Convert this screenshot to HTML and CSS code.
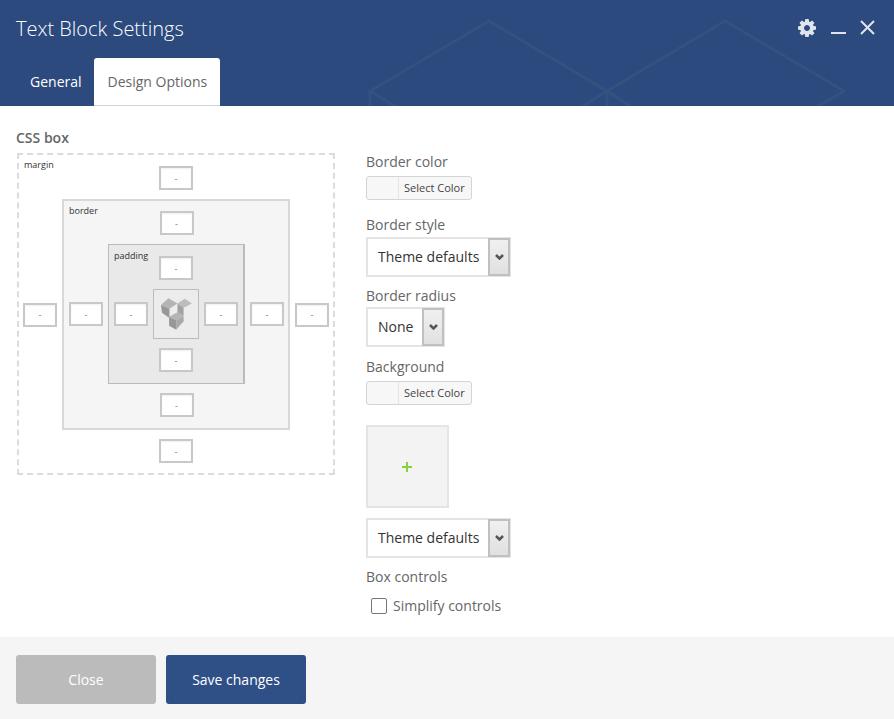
FILE: index.html
```html
<!DOCTYPE html>
<html lang="en">
<head>
    <meta charset="UTF-8">
    <meta name="viewport" content="width=device-width, initial-scale=1.0">
    <title>Text Block Settings</title>
    <link rel="stylesheet" href="styles.css">
</head>
<body>
    <div class="panel">
        <header class="panel-header">
            <!-- background pattern -->
            <svg class="header-pattern" width="894" height="106" viewBox="0 0 894 106">
                <path d="M370 106V91L489 21L607 91L725 21L844 91L815 108M370 91L398 108M607 91V106M607 91L580 108M607 91L633 108" />
            </svg>
            <div class="title-row">
                <h1>Text Block Settings</h1>
                <div class="header-controls">
                    <svg class="icon-gear" width="18" height="18" viewBox="128 128 1536 1536"><path d="M1152 896q0-106-75-181t-181-75-181 75-75 181 75 181 181 75 181-75 75-181zm512-109v222q0 12-8 23t-20 13l-185 28q-19 54-39 91 35 50 107 138 10 12 10 25t-9 23q-27 37-99 108t-94 71q-12 0-26-9l-138-108q-44 23-91 38-16 136-29 186-7 28-36 28h-222q-14 0-24.500-8.500t-11.500-21.500l-28-184q-49-16-90-37l-141 107q-10 9-25 9-14 0-25-11-126-114-165-168-7-10-7-23 0-12 8-23 15-21 51-66.500t54-70.500q-27-50-41-99l-183-27q-13-2-21-12.500t-8-23.500v-222q0-12 8-23t19-13l186-28q14-46 39-92-40-57-107-138-10-12-10-24 0-10 9-23 26-36 98.500-107.500t94.500-71.500q13 0 26 10l138 107q44-23 91-38 16-136 29-186 7-28 36-28h222q14 0 24.500 8.500t11.500 21.500l28 184q49 16 90 37l142-107q9-9 24-9 13 0 25 10 129 119 165 170 7 8 7 22 0 12-8 23-15 21-51 66.500t-54 70.500q26 50 41 98l183 28q13 2 21 12.500t8 23.500z"/></svg>
                    <span class="icon-minimize"></span>
                    <svg class="icon-close" width="15" height="15" viewBox="0 0 15 15"><path d="M1 1L14 14M14 1L1 14"/></svg>
                </div>
            </div>
            <nav class="tabs">
                <a class="tab">General</a>
                <a class="tab active">Design Options</a>
            </nav>
        </header>

        <main class="panel-body">
            <section class="css-box-col">
                <div class="heading">CSS box</div>
                <div class="layer layer-margin">
                    <span class="layer-label">margin</span>
                    <input class="box-input top" value="-">
                    <input class="box-input left" value="-">
                    <div class="layer layer-border">
                        <span class="layer-label">border</span>
                        <input class="box-input top" value="-">
                        <input class="box-input left" value="-">
                        <div class="layer layer-padding">
                            <span class="layer-label">padding</span>
                            <input class="box-input top" value="-">
                            <input class="box-input left" value="-">
                            <div class="layer-content">
                                <svg width="31" height="32" viewBox="183 57 92 93">
                                    <polygon fill="#b4b4b4" points="183,77 205,57 232,72 208,88"/>
                                    <polygon fill="#989898" points="183,77 208,88 208,115 186,100"/>
                                    <polygon fill="#bcbcbc" points="232,72 253,58 275,72 250,85"/>
                                    <polygon fill="#a2a2a2" points="232,72 250,85 250,110 232,98"/>
                                    <polygon fill="#b4b4b4" points="207,112 232,98 250,110 228,122"/>
                                    <polygon fill="#989898" points="207,112 228,122 228,150 207,138"/>
                                    <polygon fill="#a8a8a8" points="228,122 250,110 250,125 228,150"/>
                                </svg>
                            </div>
                            <input class="box-input right" value="-">
                            <input class="box-input bottom" value="-">
                        </div>
                        <input class="box-input right" value="-">
                        <input class="box-input bottom" value="-">
                    </div>
                    <input class="box-input right" value="-">
                    <input class="box-input bottom" value="-">
                </div>
            </section>

            <section class="options-col">
                <div class="field-label">Border color</div>
                <div class="color-btn gap-15"><span class="swatch"></span><span class="color-text">Select Color</span></div>

                <div class="field-label gap-2">Border style</div>
                <div class="select-box wide gap-9"><span class="select-value">Theme defaults</span><span class="select-arrow"><svg width="9" height="6" viewBox="0 0 9 6"><path d="M1 1L4.500 4.500L8 1"/></svg></span></div>

                <div class="field-label gap-1">Border radius</div>
                <div class="select-box narrow gap-10"><span class="select-value">None</span><span class="select-arrow"><svg width="9" height="6" viewBox="0 0 9 6"><path d="M1 1L4.500 4.500L8 1"/></svg></span></div>

                <div class="field-label">Background</div>
                <div class="color-btn gap-20"><span class="swatch"></span><span class="color-text">Select Color</span></div>

                <div class="image-add"><svg width="10" height="10" viewBox="0 0 10 10"><path d="M5 0V10M0 5H10"/></svg></div>

                <div class="select-box wide gap-9"><span class="select-value">Theme defaults</span><span class="select-arrow"><svg width="9" height="6" viewBox="0 0 9 6"><path d="M1 1L4.500 4.500L8 1"/></svg></span></div>

                <div class="field-label gap-9">Box controls</div>
                <label class="check-row"><span class="checkbox"></span><span class="check-text">Simplify controls</span></label>
            </section>
        </main>

        <footer class="panel-footer">
            <button class="btn btn-close">Close</button>
            <button class="btn btn-save">Save changes</button>
        </footer>
    </div>
</body>
</html>
```

FILE: styles.css
```css
* {
    box-sizing: border-box;
}
body {
    margin: 0;
    font-family: "Open Sans", sans-serif;
    font-size: 14px;
    color: #666;
    background: #fff;
}
.panel {
    display: flex;
    flex-direction: column;
    height: 719px;
    overflow: hidden;
}

/* header */
.panel-header {
    position: relative;
    height: 106px;
    display: flex;
    flex-direction: column;
    background-color: #2c4a7e;
    overflow: hidden;
}
.header-pattern {
    position: absolute;
    left: 0;
    top: 0;
}
.header-pattern path {
    fill: none;
    stroke: #33527f;
    stroke-width: 3;
}
.title-row {
    position: relative;
    height: 58px;
    display: flex;
    justify-content: space-between;
    padding: 15px 19px 0 16px;
}
h1 {
    margin: 0;
    font-size: 20px;
    font-weight: 300;
    line-height: 28px;
    color: #fff;
}
.header-controls {
    display: flex;
    align-items: flex-start;
    padding-top: 3px;
}
.icon-gear {
    margin-top: 1px;
    fill: #e0e4ec;
}
.icon-minimize {
    width: 15px;
    height: 2px;
    margin: 14px 14px 0 15px;
    background: #e0e4ec;
}
.icon-close {
    margin-top: 2px;
}
.icon-close path {
    fill: none;
    stroke: #e0e4ec;
    stroke-width: 2;
}
.tabs {
    position: relative;
    height: 48px;
    display: flex;
    padding-left: 16px;
}
.tab {
    padding: 0 12px 0 14px;
    line-height: 48px;
    color: #fff;
}
.tab.active {
    padding: 0 13px 0 14px;
    background: #fff;
    color: #666;
    border-radius: 3px 3px 0 0;
    border-bottom: 1px solid #ced3dc;
}

/* body */
.panel-body {
    flex: 1;
    display: flex;
    padding: 22px 0 0 16px;
}
.css-box-col {
    width: 350px;
}
.heading {
    font-weight: 600;
    line-height: 20px;
    margin-bottom: 5px;
}
.layer {
    position: relative;
    display: grid;
    grid-template-columns: 34px 1fr 34px;
    grid-template-rows: 24px 1fr 24px;
    gap: 9px 5px;
}
.layer > .layer,
.layer > .layer-content {
    grid-column: 2;
    grid-row: 2;
}
.layer-margin {
    width: 318px;
    height: 322px;
    margin-left: 1px;
    padding: 11px 4px 10px;
    border: 2px dashed #dcdcdc;
}
.layer-border {
    padding: 10px 4px 11px 5px;
    background: #f5f5f5;
    border: 2px solid #d8d8d8;
}
.layer-padding {
    padding: 11px 5px 11px 5px;
    background: #e9e9e9;
    border: 1px solid #bbb;
    border-right-width: 2px;
}
.layer-content {
    display: flex;
    align-items: center;
    justify-content: center;
    background: #ececec;
    border: 1px solid #bbb;
}
.layer-label {
    position: absolute;
    left: 5px;
    top: 4px;
    font-size: 9px;
    line-height: 14px;
    color: #333;
}
.layer-margin > .layer-label {
    top: 3px;
}
.layer-border > .layer-label {
    top: 3px;
}
.box-input {
    width: 34px;
    height: 24px;
    padding: 0;
    font: 9px "Open Sans", sans-serif;
    color: #777;
    text-align: center;
    background: #fff;
    border: 2px solid #c8c8c8;
    border-radius: 0;
    box-shadow: inset 0 1px 2px #f0f0f0;
}
.box-input.top {
    grid-column: 2;
    grid-row: 1;
    justify-self: center;
}
.box-input.bottom {
    grid-column: 2;
    grid-row: 3;
    justify-self: center;
}
.box-input.left {
    grid-column: 1;
    grid-row: 2;
    align-self: center;
}
.box-input.right {
    grid-column: 3;
    grid-row: 2;
    align-self: center;
}

/* options column */
.options-col {
    margin-top: 24px;
    width: 200px;
}
.field-label {
    line-height: 20px;
    margin-bottom: 4px;
}
.color-btn {
    display: flex;
    width: 106px;
    height: 24px;
    border: 1px solid #d4d4d4;
    border-radius: 3px;
    background: #f7f7f7;
}
.swatch {
    width: 32px;
    border-right: 1px solid #e4e4e4;
}
.color-text {
    padding-left: 5px;
    font-size: 11px;
    line-height: 22px;
    color: #444;
}
.field-label.gap-1 {
    margin-bottom: 1px;
}
.field-label.gap-2 {
    margin-bottom: 2px;
}
.gap-9,
.field-label.gap-9 {
    margin-bottom: 9px;
}
.gap-10 {
    margin-bottom: 10px;
}
.gap-15 {
    margin-bottom: 15px;
}
.gap-20 {
    margin-bottom: 20px;
}
.select-box {
    display: flex;
    justify-content: space-between;
    height: 40px;
    border: 2px solid #e4e4e4;
    background: #fff;
}
.select-box.wide {
    width: 145px;
}
.select-box.narrow {
    width: 79px;
}
.select-value {
    padding-left: 10px;
    line-height: 36px;
    color: #333;
}
.select-arrow {
    width: 22px;
    margin: -1px -1px -1px 0;
    display: flex;
    align-items: center;
    justify-content: center;
    background: linear-gradient(#f0f0f0, #e0e0e0);
    border: 2px solid #c0c0c0;
}
.select-arrow path {
    fill: none;
    stroke: #555;
    stroke-width: 2.500;
}
.image-add {
    width: 83px;
    height: 83px;
    margin-bottom: 10px;
    padding: 1px 1px 0 0;
    display: flex;
    align-items: center;
    justify-content: center;
    background: #f3f3f3;
    border: 2px solid #e4e4e4;
}
.image-add path {
    fill: none;
    stroke: #8bcf43;
    stroke-width: 2;
}
.check-row {
    display: flex;
    align-items: center;
    height: 20px;
    padding-left: 5px;
}
.checkbox {
    width: 16px;
    height: 16px;
    margin-right: 6px;
    background: #fff;
    border: 1px solid #777;
    border-radius: 2px;
}
.check-text {
    margin-bottom: 2px;
}

/* footer */
.panel-footer {
    height: 82px;
    display: flex;
    gap: 10px;
    padding: 18px 16px 0;
    background: #f5f5f5;
}
.btn {
    width: 140px;
    height: 49px;
    border: none;
    border-radius: 3px;
    font: 14px "Open Sans", sans-serif;
    color: #fff;
}
.btn-close {
    background: #bbb;
}
.btn-save {
    background: #2f5086;
}
```
